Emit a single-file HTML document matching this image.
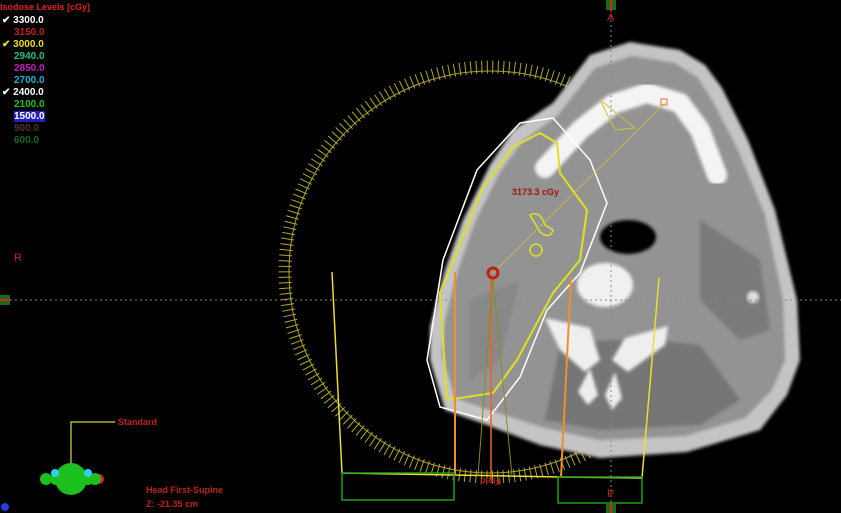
<!DOCTYPE html>
<html><head><style>
body{margin:0;background:#000;width:841px;height:513px;overflow:hidden;font-family:"Liberation Sans",sans-serif}
.t{position:absolute;font-size:10px;font-weight:bold}
</style></head><body>
<svg width="841" height="513" style="position:absolute;left:0;top:0">
<defs><filter id="b"><feGaussianBlur stdDeviation="1.5"/></filter></defs>
<!-- tick ring -->
<circle cx="490" cy="272" r="201" fill="none" stroke="#a8a028" stroke-width="1"/>
<circle cx="490" cy="272" r="205" fill="none" stroke="#b0a830" stroke-width="13" stroke-dasharray="1 4.5"/>
<!-- body -->
<path d="M590,55 L630,42 L680,50 L705,65 L722,88 L748,140 L775,210 L797,300 L800,360 L787,395 L760,430 L687,452 L600,458 L540,445 L487,425 L445,410 L430,360 L430,327 L445,270 L463,220 L490,165 L513,130 L553,103 Z" fill="#c4c4c4" filter="url(#b)"/>
<path d="M595,68 L632,56 L675,63 L698,78 L712,100 L738,150 L765,215 L783,300 L785,360 L772,390 L745,418 L685,436 L600,440 L545,428 L495,412 L455,398 L442,355 L445,320 L458,270 L475,222 L500,172 L522,142 L558,115 Z" fill="#939393" filter="url(#b)"/>
<path d="M470,300 L520,280 L500,360 L470,380 Z" fill="#888" filter="url(#b)"/>
<path d="M560,345 Q620,335 700,345 L740,400 L700,425 L600,430 L545,420 Z" fill="#767676" filter="url(#b)"/>
<path d="M700,220 L760,260 L770,330 L740,340 L700,300 Z" fill="#7a7a7a" filter="url(#b)"/>
<!-- mandible -->
<path d="M545,168 L580,130 L613,104 L647,93 L680,103 L700,130 L717,175" fill="none" stroke="#f4f4f4" stroke-width="20" stroke-linecap="round" stroke-linejoin="round" filter="url(#b)"/>
<!-- airway -->
<ellipse cx="628" cy="237" rx="28" ry="17" fill="#000" filter="url(#b)"/>
<!-- vertebra -->
<ellipse cx="605" cy="285" rx="28" ry="22" fill="#f0f0f0" filter="url(#b)"/>
<path d="M545,318 L590,328 L600,360 L585,372 L560,350 Z M668,326 L625,338 L612,360 L628,372 L665,345 Z" fill="#eee" filter="url(#b)"/>
<path d="M590,368 L598,395 L588,405 L578,392 Z M615,372 L622,398 L612,410 L605,395 Z" fill="#eee" filter="url(#b)"/>
<circle cx="753" cy="297" r="6" fill="#ddd" filter="url(#b)"/>
<!-- crosshair -->
<line x1="0" y1="300" x2="841" y2="300" stroke="#888" stroke-dasharray="2 3"/>
<line x1="611" y1="0" x2="611" y2="513" stroke="#888" stroke-dasharray="2 3"/>
<!-- contours -->
<path d="M553,118 L590,160 L607,203 L580,273 L547,310 L520,377 L487,420 L440,407 L427,360 L443,260 L477,170 L520,123 Z" fill="none" stroke="#fff" stroke-width="1.5"/>
<path d="M540,133 L557,143 L560,173 L587,210 L580,260 L553,293 L517,360 L493,393 L447,400 L440,293 L483,187 L513,147 Z" fill="none" stroke="#e0e020" stroke-width="2"/>
<path d="M530,215 Q540,210 545,225 L553,230 Q550,240 540,232 Z" fill="none" stroke="#e0e020" stroke-width="1.5"/>
<ellipse cx="536" cy="250" rx="6" ry="6" fill="none" stroke="#e0e020" stroke-width="1.5"/>
<line x1="493" y1="273" x2="665" y2="103" stroke="#d0c040" stroke-width="0.8"/>
<path d="M600,100 L635,128 L615,130 Z" fill="none" stroke="#d0c040"/>
<rect x="661" y="99" width="6" height="6" fill="none" stroke="#e07020"/>
<!-- beams -->
<polyline points="332,272 342,473 454,475 560,477 642,478 659,278" fill="none" stroke="#e8e030" stroke-width="1.5"/>
<line x1="455" y1="272" x2="455" y2="475" stroke="#f0902a" stroke-width="2"/>
<line x1="571" y1="278" x2="561" y2="477" stroke="#f0902a" stroke-width="2"/>
<line x1="491" y1="278" x2="491" y2="480" stroke="#f06020" stroke-width="1.5"/>
<line x1="493" y1="278" x2="478" y2="476" stroke="#8a8a20"/>
<line x1="493" y1="278" x2="512" y2="476" stroke="#8a8a20"/>
<rect x="342" y="473" width="112" height="27" fill="none" stroke="#20a020" stroke-width="1.5"/>
<rect x="558" y="477" width="84" height="26" fill="none" stroke="#20a020" stroke-width="1.5"/>
<circle cx="493" cy="273" r="5" fill="none" stroke="#c02010" stroke-width="3"/>
<!-- markers -->
<rect x="606" y="0" width="10" height="10" fill="#1a6a1a"/><rect x="610" y="0" width="2" height="10" fill="#c03020"/>
<rect x="606" y="503" width="10" height="10" fill="#1a6a1a"/><rect x="610" y="503" width="2" height="10" fill="#c03020"/>
<rect x="0" y="295" width="10" height="10" fill="#1a6a1a"/><rect x="0" y="299" width="10" height="2" fill="#c03020"/>
<!-- orientation widget -->
<polyline points="115,422 71,422 71,463" fill="none" stroke="#b0b020" stroke-width="1.5"/>
<circle cx="71" cy="479" r="16" fill="#1cc01c"/>
<circle cx="46" cy="479" r="6" fill="#1cc01c"/><circle cx="56" cy="479" r="6" fill="#1cc01c"/>
<circle cx="88" cy="479" r="6" fill="#1cc01c"/><circle cx="99" cy="479" r="5" fill="#e02020"/><circle cx="95" cy="479" r="6" fill="#1cc01c"/>
<circle cx="55" cy="473" r="4" fill="#30d0f0"/><circle cx="88" cy="473" r="4" fill="#30d0f0"/>
<circle cx="5" cy="507" r="4" fill="#2040e0"/>
</svg>
<div class="t" style="left:0;top:2px;color:#e02020;font-size:9px">Isodose Levels [cGy]</div>
<div class="t" style="left:2px;top:15px;color:#fff">✔ 3300.0</div>
<div class="t" style="left:14px;top:27px;color:#c02020">3150.0</div>
<div class="t" style="left:2px;top:39px;color:#e8e020">✔ <span>3000.0</span></div>
<div class="t" style="left:14px;top:51px;color:#20c080">2940.0</div>
<div class="t" style="left:14px;top:63px;color:#c020c0">2850.0</div>
<div class="t" style="left:14px;top:75px;color:#20b0d0">2700.0</div>
<div class="t" style="left:2px;top:87px;color:#fff">✔ 2400.0</div>
<div class="t" style="left:14px;top:99px;color:#20c020">2100.0</div>
<div class="t" style="left:14px;top:111px;color:#fff;background:#2020c0">1500.0</div>
<div class="t" style="left:14px;top:123px;color:#503030">900.0</div>
<div class="t" style="left:14px;top:135px;color:#1a6a1a">600.0</div>
<div class="t" style="left:607px;top:12px;color:#c02020;font-weight:normal;font-size:11px">A</div>
<div class="t" style="left:607px;top:488px;color:#c02020;font-weight:normal;font-size:11px">P</div>
<div class="t" style="left:14px;top:252px;color:#c02020;font-weight:normal;font-size:11px">R</div>
<div class="t" style="left:512px;top:187px;color:#a01010;font-size:9px">3173.3 cGy</div>
<div class="t" style="left:118px;top:417px;color:#c02020;font-size:9px">Standard</div>
<div class="t" style="left:146px;top:485px;color:#c02020;font-size:9px">Head First-Supine</div>
<div class="t" style="left:146px;top:499px;color:#c02020;font-size:9px">Z: -21.35 cm</div>
<div class="t" style="left:480px;top:476px;color:#c02020;font-size:9px;transform:rotate(180deg)">Field</div>
</body></html>
